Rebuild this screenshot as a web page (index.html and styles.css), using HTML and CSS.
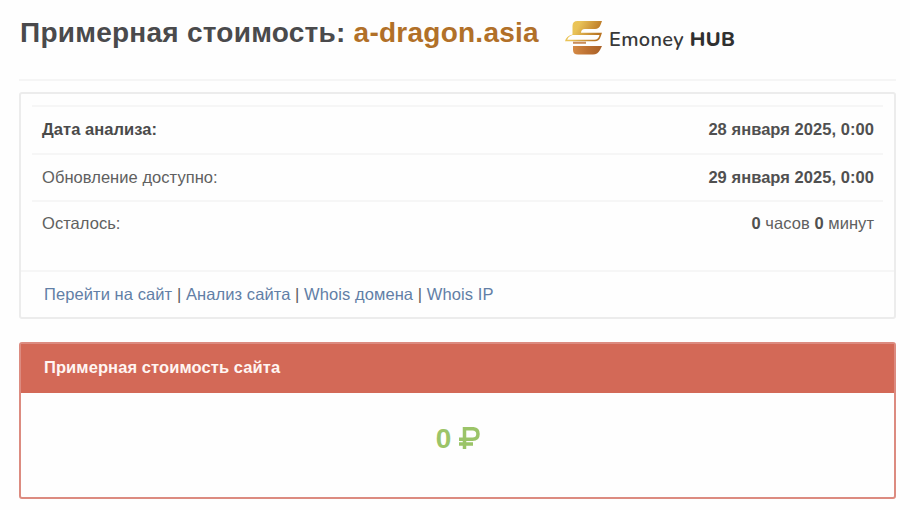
FILE: index.html
```html
<!DOCTYPE html>
<html lang="ru">
<head>
<meta charset="utf-8">
<title>Примерная стоимость: a-dragon.asia</title>
<link rel="stylesheet" href="styles.css">
</head>
<body>
<main class="page">
  <header class="header">
    <h1 class="title">Примерная стоимость: <span class="domain">a-dragon.asia</span></h1>
    <div class="brand">
      <svg class="logo" viewBox="0 0 38 34" aria-hidden="true">
        <defs>
          <linearGradient id="gold" x1="0" y1="0" x2="1" y2="0.3"><stop offset="0" stop-color="#edc955"/><stop offset="0.4" stop-color="#e9c257"/><stop offset="1" stop-color="#b97524"/></linearGradient>
          <linearGradient id="copper" x1="0" y1="0" x2="1" y2="0"><stop offset="0" stop-color="#d58a45"/><stop offset="0.5" stop-color="#bd7132"/><stop offset="1" stop-color="#a96128"/></linearGradient>
        </defs>
        <path fill="url(#gold)" d="M12.500 0H37L35.500 4Q34 8 30 8H20Q16 8 16 11.800H37L35.500 16Q34 20.300 30 20.300H0Q1 15 7.500 13.500V5Q7.500 0 12.500 0Z"/>
        <path fill="#fefefe" d="M7.500 14H34.500Q33.500 18.700 29.500 18.700H2.200Q3.500 15 7.500 14Z"/>
        <path fill="#c98d5b" d="M8 20.700H21V22.800H8Z"/>
        <path fill="url(#copper)" d="M8 25H37L35 29Q32.500 33.500 28 33.500H13Q8 33.500 8 29Z"/>
      </svg>
      <span class="brand-name">Emoney <b>HUB</b></span>
    </div>
  </header>

  <section class="card">
    <div class="rows">
      <div class="row strong"><span class="date-label">Дата анализа:</span><span>28 января 2025, 0:00</span></div>
      <div class="row"><span>Обновление доступно:</span><b>29 января 2025, 0:00</b></div>
      <div class="row"><span>Осталось:</span><span><b>0</b> часов <b>0</b> минут</span></div>
    </div>
    <nav class="links"><a>Перейти на сайт</a> | <a>Анализ сайта</a> | <a>Whois домена</a> | <a>Whois IP</a></nav>
  </section>

  <section class="price-card">
    <h2 class="price-title">Примерная стоимость сайта</h2>
    <div class="price"><span>0</span>
      <svg class="ruble" viewBox="0 0 21 22" role="img" aria-label="₽"><path d="M5.500 22V1.700H13.500Q19 1.700 19 7T13.500 12.300H0M0 17H14" fill="none" stroke="#9bc468" stroke-width="3.500"/></svg>
    </div>
  </section>
</main>
</body>
</html>
```

FILE: styles.css
```css
* { box-sizing: border-box; }
body {
  margin: 0;
  background: #fefefe;
  color: #606060;
  font-family: "Liberation Sans", Arial, sans-serif;
  font-size: 16.5px;
}
.page { width: 877px; margin-left: 19px; }
.header {
  display: flex;
  height: 81px;
  border-bottom: 2px solid #f5f5f5;
}
.title {
  width: 546px;
  margin: 0;
  padding: 16px 0 0 1px;
  font-size: 28px;
  line-height: 34px;
  letter-spacing: 0.25px;
  white-space: nowrap;
  color: #4a4a4c;
}
.domain { color: #b17028; }
.brand { display: flex; padding-top: 21px; gap: 6px; }
.logo { width: 38px; height: 34px; }
.brand-name {
  padding-top: 1px;
  font: 600 20px/36px "Nunito", "Open Sans", sans-serif;
  letter-spacing: 0.35px;
  color: #383838;
  white-space: nowrap;
}
.brand-name b { font-weight: 800; color: #303030; letter-spacing: 0.5px; }
.card {
  height: 227px;
  margin-top: 11px;
  border: 2px solid #ececec;
  border-radius: 3px;
}
.rows { height: 176px; padding: 11px 11px 0 11px; }
.row {
  display: flex;
  justify-content: space-between;
  height: 47px;
  padding: 0 9px 0 10px;
  border-top: 2px solid #f6f6f6;
  line-height: 44px;
  letter-spacing: 0.05px;
}
.row:last-child { line-height: 43px; }
.strong { height: 48px; font-weight: bold; }
.date-label { color: #4a4a4a; }
b, .strong { color: #505050; }
.links {
  height: 47px;
  padding-left: 23px;
  border-top: 2px solid #f6f6f6;
  line-height: 45px;
  letter-spacing: 0.08px;
}
.links a { color: #627fa6; }
.price-card {
  height: 157px;
  margin-top: 23px;
  border: 2px solid #dc8b80;
  border-radius: 3px;
}
.price-title {
  height: 49px;
  margin: 0;
  padding-left: 23px;
  background: #d36957;
  color: #fff5f2;
  font-size: 16.5px;
  line-height: 46px;
  letter-spacing: 0.09px;
}
.price {
  display: flex;
  justify-content: center;
  gap: 8px;
  padding: 29px 0 0 1px;
  color: #9bc468;
  font-size: 28px;
  font-weight: bold;
  line-height: 34px;
}
.ruble { width: 21px; height: 22px; margin-top: 5px; }
```
